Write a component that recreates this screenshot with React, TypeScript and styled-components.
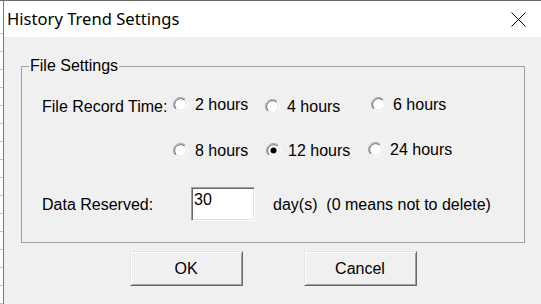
import React from 'react'
import styled, { createGlobalStyle } from 'styled-components'

const GlobalStyle = createGlobalStyle`
  html, body {
    margin: 0;
    padding: 0;
    overflow: hidden;
    background: #f0f0f0;
  }
  body {
    font-family: 'Liberation Sans', Arial, sans-serif;
    color: #000;
  }
`

const Screen = styled.div`
  display: flex;
  width: 541px;
  height: 304px;
  box-sizing: border-box;
  border-top: 1px solid #6b6b6b;
`

// strip of the spreadsheet lying behind the dialog
const SheetEdge = styled.div`
  width: 3px;
  padding-top: 15px;
  box-sizing: border-box;
  background: repeating-linear-gradient(to bottom, transparent 0 17px, #c4c4c4 17px 18px) content-box,
    linear-gradient(#fff, #fff) border-box;
`

const Window = styled.div`
  flex: 1;
  display: flex;
  flex-direction: column;
  border-left: 1px solid #7a7a7a;
  background: #f0f0f0;
`

const TitleBar = styled.header`
  height: 36px;
  display: flex;
  align-items: center;
  justify-content: space-between;
  padding-left: 3px;
  background: #fff;
`

const Title = styled.h1`
  margin: 0;
  padding-top: 1px;
  font-family: 'Noto Sans', 'Open Sans', sans-serif;
  font-size: 16.6px;
  font-weight: 400;
  line-height: 1;
  color: #000;
`

const CloseButton = styled.button`
  width: 46px;
  height: 36px;
  padding: 0;
  border: 0;
  background: transparent;
  display: flex;
  align-items: center;
  justify-content: center;
`

const Body = styled.div`
  display: flex;
  flex-direction: column;
  padding: 20px 16px 0 17px;
`

const Group = styled.fieldset`
  margin: 0;
  padding: 0;
  min-inline-size: 0;
  border: 1px solid #a0a0a0;
`

const Legend = styled.legend`
  margin-left: 7px;
  padding: 0 1px;
  font-size: 16px;
  line-height: 18px;
`

const GroupContent = styled.div`
  padding: 21px 0 21px 20px;
`

const RecordGrid = styled.div`
  display: grid;
  grid-template-columns: 131px 92px 106px auto;
  grid-auto-rows: 20px;
  row-gap: 26px;
  align-items: start;
`

const FieldLabel = styled.span<{ $width?: number; $top?: number }>`
  display: block;
  width: ${p => (p.$width ? `${p.$width}px` : 'auto')};
  margin-top: ${p => p.$top ?? 0}px;
  font-size: 16px;
  line-height: 18px;
  white-space: pre;
`

const Option = styled.label<{ $dx?: number; $dy?: number }>`
  display: flex;
  align-items: flex-start;
  gap: 7px;
  margin-top: ${p => p.$dy ?? 0}px;
  margin-left: ${p => p.$dx ?? 0}px;
  font-size: 16px;
  line-height: 18px;
  white-space: nowrap;
  svg {
    margin-top: 1px;
    flex: none;
  }
`

const DataRow = styled.div`
  display: flex;
  align-items: flex-start;
  margin-top: 25px;
`

const NumberBox = styled.input`
  width: 64px;
  height: 34px;
  box-sizing: border-box;
  margin: 0 18px 0 0;
  padding: 3px 2px 11px 2px;
  border: 1px solid;
  border-color: #a0a0a0 #fff #fff #a0a0a0;
  box-shadow: inset 1px 1px 0 #696969, inset -1px -1px 0 #e3e3e3;
  background: #fff;
  font-family: 'Liberation Sans', Arial, sans-serif;
  font-size: 16px;
  line-height: 18px;
  color: #000;
  outline: none;
`

const ButtonRow = styled.div`
  display: flex;
  justify-content: center;
  gap: 61px;
  margin-top: 8px;
`

const DialogButton = styled.button`
  width: 113px;
  height: 35px;
  box-sizing: border-box;
  padding: 0;
  border: 1px solid;
  border-color: #e3e3e3 #696969 #696969 #e3e3e3;
  box-shadow: inset 1px 1px 0 #fff, inset -1px -1px 0 #a0a0a0;
  background: #f0f0f0;
  font-family: 'Liberation Sans', Arial, sans-serif;
  font-size: 16px;
  color: #000;
`

const RadioMark: React.FC<{ checked?: boolean }> = ({ checked }) => (
  <svg width="15" height="15" viewBox="0 0 15 15">
    <circle cx="7.5" cy="7.5" r="6" fill="#fff" />
    <path d="M2.55 12.45 A7 7 0 0 1 12.45 2.55" fill="none" stroke="#a0a0a0" />
    <path d="M12.45 2.55 A7 7 0 0 1 2.55 12.45" fill="none" stroke="#fff" />
    <path d="M3.26 11.74 A6 6 0 0 1 11.74 3.26" fill="none" stroke="#696969" />
    <path d="M11.74 3.26 A6 6 0 0 1 3.26 11.74" fill="none" stroke="#e3e3e3" />
    {checked && <circle cx="7.5" cy="7.5" r="3" fill="#000" />}
  </svg>
)

const CloseIcon = () => (
  <svg width="15" height="15" viewBox="0 0 15 15">
    <path d="M0.5 0.5 L14.5 14.5 M14.5 0.5 L0.5 14.5" stroke="#000" strokeWidth="1" />
  </svg>
)

type Choice = { label: string; dx?: number; dy?: number }

const firstRow: Choice[] = [
  { label: '2 hours' },
  { label: '4 hours', dy: 2 },
  { label: '6 hours' },
]

const secondRow: Choice[] = [
  { label: '8 hours' },
  { label: '12 hours', dx: 1 },
  { label: '24 hours', dx: -3, dy: -1 },
]

export default function App() {
  const selected = '12 hours'

  const renderChoice = (c: Choice) => (
    <Option key={c.label} $dx={c.dx} $dy={c.dy}>
      <RadioMark checked={c.label === selected} />
      {c.label}
    </Option>
  )

  return (
    <>
      <GlobalStyle />
      <Screen>
        <SheetEdge />
        <Window>
          <TitleBar>
            <Title>History Trend Settings</Title>
            <CloseButton aria-label="Close">
              <CloseIcon />
            </CloseButton>
          </TitleBar>

          <Body>
            <Group>
              <Legend>File Settings</Legend>
              <GroupContent>
                <RecordGrid>
                  <FieldLabel $top={2}>File Record Time:</FieldLabel>
                  {firstRow.map(renderChoice)}
                  <span />
                  {secondRow.map(renderChoice)}
                </RecordGrid>

                <DataRow>
                  <FieldLabel $width={149} $top={9}>
                    Data Reserved:
                  </FieldLabel>
                  <NumberBox defaultValue="30" />
                  <FieldLabel $top={9}>day(s)  (0 means not to delete)</FieldLabel>
                </DataRow>
              </GroupContent>
            </Group>

            <ButtonRow>
              <DialogButton>OK</DialogButton>
              <DialogButton>Cancel</DialogButton>
            </ButtonRow>
          </Body>
        </Window>
      </Screen>
    </>
  )
}
